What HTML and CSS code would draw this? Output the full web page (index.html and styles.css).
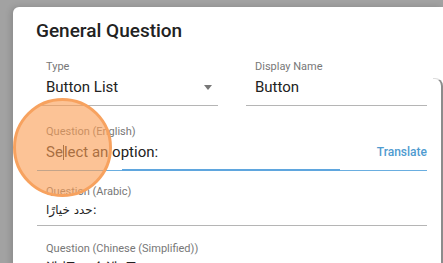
FILE: index.html
```html
<!DOCTYPE html>
<html lang="en">
<head>
    <meta charset="UTF-8">
    <title>General Question</title>
    <link rel="stylesheet" href="styles.css">
</head>
<body>
    <div class="dialog">
        <h1>General Question</h1>
        <div class="row">
            <div class="field">
                <label>Type</label>
                <div class="value select">Button List <span class="arrow"></span></div>
            </div>
            <div class="field">
                <label>Display Name</label>
                <div class="value">Button</div>
            </div>
        </div>
        <div class="panel">
            <div class="field focused">
                <label>Question (English)</label>
                <div class="value">Se<span class="caret"></span>lect an option: <a class="translate">Translate</a></div>
                <div class="ripple"></div>
            </div>
            <div class="field arabic">
                <label>Question (Arabic)</label>
                <div class="value">حدد خيارًا:</div>
            </div>
            <div class="field chinese">
                <label>Question (Chinese (Simplified))</label>
                <div class="value">选择一个选项：</div>
            </div>
        </div>
        <div class="scroll-edge"></div>
        <div class="touch"></div>
    </div>
</body>
</html>
```
FILE: styles.css
```css
body {
    margin: 0;
    background-color: #a2a2a2;
    font-family: Roboto, "Noto Sans CJK SC", sans-serif;
    height: 263px;
    overflow: hidden;
    padding: 7px 0 0 13px;
    box-sizing: border-box;
}

.dialog {
    position: relative;
    background-color: white;
    border-radius: 6px 0 0 0;
    height: 300px;
    padding: 12px 0 0 23px;
    box-shadow: -2px 0 6px rgba(0, 0, 0, 0.15);
}

h1 {
    margin: 0 0 17px 0;
    font-size: 19px;
    font-weight: 500;
    line-height: 24px;
    color: #222;
}

.row {
    display: flex;
    gap: 28px;
    width: 390px;
    margin-left: 1px;
}

.field {
    position: relative;
    flex: 1;
    padding: 0 0 8px 9px;
    border-bottom: 1px solid #b5b5b5;
}

label {
    display: block;
    font-size: 11px;
    line-height: 14px;
    color: #777;
    margin-bottom: 3px;
}

.value {
    display: flex;
    align-items: center;
    font-size: 15px;
    line-height: 20px;
    color: #222;
}

.select .arrow {
    margin-left: auto;
    margin-right: 6px;
    border-left: 4px solid transparent;
    border-right: 4px solid transparent;
    border-top: 5px solid #777;
}

.panel {
    width: 390px;
    margin-top: 19px;
    margin-left: 1px;
}

.focused {
    margin-bottom: 14px;
    border-bottom-color: #6aaee0;
}

.caret {
    display: inline-block;
    width: 1px;
    height: 15px;
    background-color: #333;
}

.translate {
    margin-left: auto;
    font-size: 12px;
    font-weight: 500;
    color: #4f9bd0;
}

.ripple {
    position: absolute;
    left: 85px;
    bottom: -1px;
    width: 218px;
    height: 2px;
    background-color: #5fa6de;
}

.arabic {
    padding-bottom: 6px;
    margin-bottom: 16px;
}

.arabic .value {
    font-family: "DejaVu Sans", sans-serif;
    font-size: 12px;
    line-height: 17px;
}

.scroll-edge {
    position: absolute;
    right: 0;
    top: 71px;
    width: 8px;
    height: 240px;
    border-top: 1px solid #ddd;
    border-right: 2px solid #8c8c8c;
    border-top-right-radius: 8px;
}

.touch {
    position: absolute;
    left: 0;
    top: 91px;
    width: 93px;
    height: 93px;
    border-radius: 50%;
    border: 3px solid #f7a25f;
    background-color: rgba(250, 158, 85, 0.62);
}
```
